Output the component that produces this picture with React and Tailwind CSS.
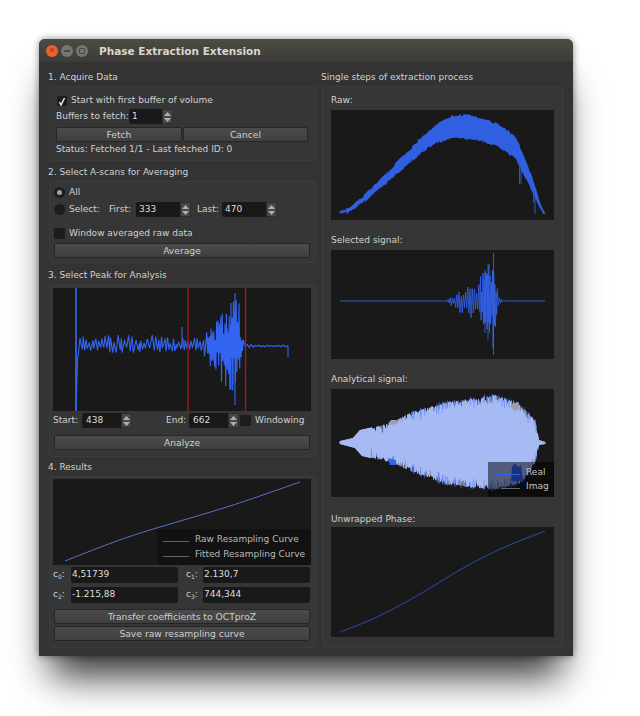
import React from "react";

function rng(seed) {
  let s = seed;
  return () => {
    s = (s * 16807) % 2147483647;
    return (s - 1) / 2147483646;
  };
}
function interp(pts, x) {
  if (x <= pts[0][0]) return pts[0][1];
  for (let i = 1; i < pts.length; i++) {
    if (x <= pts[i][0]) {
      const t = (x - pts[i - 1][0]) / (pts[i][0] - pts[i - 1][0]);
      return pts[i - 1][1] + t * (pts[i][1] - pts[i - 1][1]);
    }
  }
  return pts[pts.length - 1][1];
}
// Catmull-Rom interpolation for smooth envelopes
function curveAt(pts, x) {
  if (x <= pts[0][0]) return pts[0][1];
  for (let i = 0; i < pts.length - 1; i++) {
    if (x <= pts[i + 1][0]) {
      const p0 = pts[Math.max(i - 1, 0)][1];
      const p1 = pts[i][1];
      const p2 = pts[i + 1][1];
      const p3 = pts[Math.min(i + 2, pts.length - 1)][1];
      const t = (x - pts[i][0]) / (pts[i + 1][0] - pts[i][0]);
      return 0.5 * (2 * p1 + (p2 - p0) * t + (2 * p0 - 5 * p1 + 4 * p2 - p3) * t * t + (3 * p1 - p0 - 3 * p2 + p3) * t * t * t);
    }
  }
  return pts[pts.length - 1][1];
}
const line = (pts) => pts.map((p, i) => (i ? "L" : "M") + p[0].toFixed(1) + " " + p[1].toFixed(1)).join("");
function smooth(pts) {
  let d = `M${pts[0][0]} ${pts[0][1]}`;
  for (let i = 0; i < pts.length - 1; i++) {
    const p0 = pts[Math.max(i - 1, 0)];
    const p1 = pts[i];
    const p2 = pts[i + 1];
    const p3 = pts[Math.min(i + 2, pts.length - 1)];
    const c1 = [p1[0] + (p2[0] - p0[0]) / 6, p1[1] + (p2[1] - p0[1]) / 6];
    const c2 = [p2[0] - (p3[0] - p1[0]) / 6, p2[1] - (p3[1] - p1[1]) / 6];
    d += `C${c1[0].toFixed(1)} ${c1[1].toFixed(1)} ${c2[0].toFixed(1)} ${c2[1].toFixed(1)} ${p2[0]} ${p2[1]}`;
  }
  return d;
}

function peakPath() {
  const r = rng(11);
  const upEnv = [[26, 11], [100, 11], [130, 8], [150, 10], [154, 18], [160, 26], [168, 34], [175, 42], [182, 54], [186, 46], [189, 10], [192, 3], [205, 1], [235, 1]];
  const downEnv = [[26, 7], [100, 7], [130, 5], [150, 8], [154, 18], [160, 24], [168, 36], [175, 42], [182, 48], [186, 38], [189, 8], [192, 2], [205, 1], [235, 1]];
  const p = [[23, 123], [24.5, 72], [26, 60], [27, 50]];
  let up = true;
  for (let x = 28; x < 234; ) {
    const a = up ? interp(upEnv, x) : interp(downEnv, x);
    p.push([x, 58 + (up ? -1 : 1) * a * (0.2 + 0.8 * r())]);
    up = !up;
    x += x > 152 && x < 190 ? 0.7 : x > 190 ? 2 : 0.6 + r() * 2;
  }
  p.push([235, 58], [235, 69]);
  return (
    line(p) +
    "M182 5L182 117M129 39L129 60M178 15L178 102M180 30L180 96" +
    "M174 40L174 76M176 40L176 78M178 38L178 80M180 38L180 76M182 40L182 78M184 42L184 76M186 45L186 70"
  );
}

function rawPath() {
  const top = [[9, 101.7], [24, 92.7], [50.7, 68], [80.7, 38], [104, 16.7], [127, 5], [164, 13], [184, 28], [197, 57], [214, 103]];
  const bot = [[9, 104], [27, 95], [67, 63], [100, 36], [127, 28], [157, 33], [184, 48], [201, 80], [214, 105]];
  const r = rng(5);
  let d = "";
  let tn = 0;
  let bn = 0;
  for (let x = 9; x <= 214; x += 0.5) {
    if (r() < 0.3) tn = r() * 2.2;
    if (r() < 0.3) bn = r() * 2.6;
    const t = curveAt(top, x) - tn + 1;
    let b = curveAt(bot, x) + bn - 1;
    if (x > 185 && r() < 0.14) b += r() * 22;
    const X = x.toFixed(1);
    d += `M${X} ${t.toFixed(1)}L${X} ${Math.min(b, 104).toFixed(1)}`;
  }
  return d;
}

function selectedPath() {
  const r = rng(23);
  const env = [[117, 5], [125, 8], [135, 15], [145, 20], [150, 26], [155, 35], [160, 38], [163, 46], [165, 20], [168, 4], [172, 1], [176, 0]];
  const p = [[9, 51], [117, 51]];
  let up = true;
  for (let x = 117; x < 176; ) {
    const a = interp(env, x) * (0.3 + 0.7 * r());
    p.push([x, 51 + (up ? -a : a * 1.1)]);
    up = !up;
    x += x > 148 && x < 166 ? 0.6 : 1.1;
  }
  p.push([176, 51], [214, 51]);
  return line(p) + "M162.5 3L162.5 105M157 14L157 90M154 20L154 83";
}

const analyticTop = [[9, 52], [22, 49], [29, 41], [47, 37], [61, 33], [81, 23], [117, 13], [164, 6], [187, 14], [204, 31], [208, 51], [214, 53]];
const analyticBot = [[9, 55], [24, 59], [31, 67], [61, 74], [84, 84], [117, 96], [164, 101], [191, 94], [204, 74], [208, 56], [214, 55]];
function analyticPaths() {
  const r = rng(37);
  let fill = "";
  let blue = "";
  for (let x = 9; x <= 214; x += 0.5) {
    const t = interp(analyticTop, x);
    const b = interp(analyticBot, x);
    const noisy = x > 40 && x < 207;
    const tj = t + (noisy ? r() * r() * 9 : 0);
    const bj = b - (noisy ? r() * r() * 10 : 0);
    const X = x.toFixed(1);
    fill += `M${X} ${tj.toFixed(1)}L${X} ${bj.toFixed(1)}`;
    if (noisy && x > 70 && r() < 0.16) {
      blue += `M${X} ${(t - r() * 2).toFixed(1)}L${X} ${(t + 4 + r() * 6).toFixed(1)}M${X} ${(b - 4 - r() * 6).toFixed(1)}L${X} ${(b + r() * 2).toFixed(1)}`;
    }
  }
  return { fill, blue };
}
const analytic = analyticPaths();

const phasePts = [[9, 105], [44, 91], [84, 70], [134, 40], [174, 20], [214, 4]];
const curvePts = [[12, 82], [57, 64.5], [97, 51], [177, 27], [247, 3]];

function Plot({ w, h, children, overlay }) {
  return (
    <div className="relative shrink-0 bg-[#191919]" style={{ width: w, height: h }}>
      <svg width={w} height={h} viewBox={`0 0 ${w} ${h}`} className="block" fill="none">
        {children}
      </svg>
      {overlay}
    </div>
  );
}

function Group({ className = "", children }) {
  return <div className={"rounded-[2px] border border-[#3c3c3c] bg-[#363636] " + className}>{children}</div>;
}

function Heading({ children, className = "" }) {
  return <div className={"h-[14px] leading-[16px] text-[#d2d2d2] " + className}>{children}</div>;
}

function Btn({ children, className = "" }) {
  return (
    <div className={"flex h-[15px] items-center justify-center rounded-[2px] border border-[#262626] bg-gradient-to-b from-[#4b4b4b] to-[#3f3f3f] text-[9.2px] text-[#cfcfcf] " + className}>
      {children}
    </div>
  );
}

function Spin({ value, inputClass }) {
  return (
    <div className="flex h-[15px] shrink-0">
      <div className={"flex items-center rounded-l-[2px] bg-[#191919] pl-[3px] text-[#dedede] " + inputClass}>{value}</div>
      <div className="flex w-[11px] flex-col items-center justify-center gap-[2px] rounded-r-[2px] border border-[#2c2c2c] bg-[#484848]">
        <svg width="7" height="4" viewBox="0 0 7 4"><path d="M3.5 0L7 4H0Z" fill="#b0b0b0" /></svg>
        <svg width="7" height="4" viewBox="0 0 7 4"><path d="M0 0H7L3.5 4Z" fill="#b0b0b0" /></svg>
      </div>
    </div>
  );
}

function Check({ checked, className = "" }) {
  return (
    <div className={"flex shrink-0 items-center justify-center rounded-[1px] bg-[#1d1d1d] " + className}>
      {checked && (
        <svg width="8" height="9" viewBox="0 0 8 9" fill="none">
          <path d="M1.5 5L3 8L6.5 1" stroke="#e6e6e6" strokeWidth="1.5" />
        </svg>
      )}
    </div>
  );
}

function Radio({ on }) {
  return (
    <div className="flex h-[11px] w-[11px] shrink-0 items-center justify-center rounded-full bg-[#1d1d1d]">
      {on && <div className="h-[5px] w-[5px] rounded-full bg-[#a0a0a0]" />}
    </div>
  );
}

function Coef({ name, sub, value, labelClass = "w-[18px]" }) {
  return (
    <div className="flex items-center">
      <div className={"text-[#cfcfcf] " + labelClass}>
        {name}
        <sub className="text-[6px]">{sub}</sub>:
      </div>
      <div className="flex h-[16px] w-[107px] items-center rounded-[2px] bg-[#191919] pl-[1px] text-[#dedede]">{value}</div>
    </div>
  );
}

const BLUE = "#3365f2";

export default function App() {
  return (
    <div
      className="h-[716px] w-[640px] overflow-hidden bg-white pl-[39px] pt-[39px] text-[9px]"
      style={{ fontFamily: '"DejaVu Sans", sans-serif' }}
    >
      <div className="flex h-[617px] w-[534px] flex-col rounded-t-[6px] bg-[#333333] shadow-[0_32px_36px_-12px_rgba(0,0,0,0.8),0_0_7px_rgba(0,0,0,0.45)]">
        {/* Title bar */}
        <div className="flex h-[23px] shrink-0 items-center rounded-t-[6px] bg-gradient-to-b from-[#4e4b44] to-[#3c3b37] pl-[7px]">
          <div className="flex h-[12px] w-[12px] items-center justify-center rounded-full bg-[#e9622d] text-[7px] leading-none text-[#7a2a10]">×</div>
          <div className="ml-[3px] h-[12px] w-[12px] rounded-full bg-[#77756f]">
            <div className="mx-[3px] mt-[5px] h-[2px] bg-[#4a4843]" />
          </div>
          <div className="ml-[3px] flex h-[12px] w-[12px] items-center justify-center rounded-full bg-[#77756f]">
            <div className="h-[6px] w-[6px] rounded-[1px] border border-[#4a4843]" />
          </div>
          <div className="ml-[11px] pt-[2px] text-[10.5px] font-bold text-[#d9d6cf]">Phase Extraction Extension</div>
        </div>

        {/* Body */}
        <div className="flex flex-1 pl-[10px] pt-[7px]">
          {/* Left column */}
          <div className="flex w-[267px] flex-col">
            <Heading className="-ml-px">1. Acquire Data</Heading>
            <Group className="mt-[3px] h-[75px] pl-[6px] pr-[7px] pt-[9px]">
              <div className="flex h-[10px] items-center">
                <Check checked className="ml-px h-[10px] w-[10px]" />
                <span className="ml-[4px] text-[#d2d2d2]">Start with first buffer of volume</span>
              </div>
              <div className="mt-[3px] flex items-center">
                <span className="w-[73px] whitespace-nowrap text-[#d2d2d2]">Buffers to fetch:</span>
                <Spin value="1" inputClass="w-[33px]" />
              </div>
              <div className="mt-[3px] flex gap-px">
                <Btn className="w-[126px]">Fetch</Btn>
                <Btn className="w-[125px]">Cancel</Btn>
              </div>
              <div className="mt-[1px] leading-[12px] text-[#d2d2d2]">Status: Fetched 1/1 - Last fetched ID: 0</div>
            </Group>

            <Heading className="-ml-px mt-[3px]">2. Select A-scans for Averaging</Heading>
            <Group className="mt-[3px] h-[82px] pl-[4px] pr-[5px] pt-[5px]">
              <div className="flex h-[11px] items-center">
                <Radio on />
                <span className="ml-[4px] text-[#d2d2d2]">All</span>
              </div>
              <div className="mt-[4px] flex items-center">
                <Radio />
                <span className="ml-[4px] w-[40px] text-[#d2d2d2]">Select:</span>
                <span className="w-[27px] text-[#d2d2d2]">First:</span>
                <Spin value="333" inputClass="w-[44px]" />
                <span className="ml-[6px] w-[25px] text-[#d2d2d2]">Last:</span>
                <Spin value="470" inputClass="w-[44px]" />
              </div>
              <div className="mt-[11px] flex h-[11px] items-center">
                <Check className="h-[11px] w-[11px]" />
                <span className="ml-[4px] text-[#d2d2d2]">Window averaged raw data</span>
              </div>
              <Btn className="mt-[4px] w-[256px]">Average</Btn>
            </Group>

            <Heading className="-ml-px mt-[4px]">3. Select Peak for Analysis</Heading>
            <Group className="mt-[3px] h-[173px] pl-[3px] pt-[3px]">
              <Plot w={258} h={123}>
                <path d="M23 0V123" stroke="#2f59cc" strokeWidth="2" />
                <path d={peakPath()} stroke={BLUE} strokeWidth="1.1" />
                <path d="M135 0V123M192.5 0V123" stroke="#a01a1a" strokeWidth="1.4" />
              </Plot>
              <div className="mt-[2px] flex items-center">
                <span className="w-[29px] text-[#d2d2d2]">Start:</span>
                <Spin value="438" inputClass="w-[39px] pl-[4px]" />
                <span className="ml-[34px] w-[23px] text-[#d2d2d2]">End:</span>
                <Spin value="662" inputClass="w-[39px] pl-[4px]" />
                <Check className="ml-px h-[11px] w-[11px]" />
                <span className="ml-[4px] text-[#d2d2d2]">Windowing</span>
              </div>
              <Btn className="ml-px mt-[7px] w-[256px]">Analyze</Btn>
            </Group>

            <Heading className="-ml-px mt-[2px]">4. Results</Heading>
            <Group className="mt-[3px] h-[172px] pl-[3px] pt-[2px]">
              <Plot
                w={258}
                h={86}
                overlay={
                  <div className="absolute bottom-0 right-0 h-[36px] w-[154px] bg-[#121212] text-[#b9b9b9]">
                    <div className="absolute left-[6px] top-[12px] h-px w-[26px] bg-[#3161ea]" />
                    <div className="absolute left-[6px] top-[27px] h-px w-[26px] bg-[#666666]" />
                    <div className="absolute left-[38px] top-[3px] whitespace-nowrap leading-[14px]">Raw Resampling Curve</div>
                    <div className="absolute left-[38px] top-[18px] whitespace-nowrap leading-[14px]">Fitted Resampling Curve</div>
                  </div>
                }
              >
                <path d={smooth(curvePts)} stroke="#5a6fc8" strokeWidth="1" />
              </Plot>
              <div className="mt-[2px] flex">
                <Coef name="c" sub="0" value="4,51739" />
                <div className="ml-[8px]">
                  <Coef name="c" sub="1" value="2.130,7" labelClass="w-[17px]" />
                </div>
              </div>
              <div className="mt-[4px] flex">
                <Coef name="c" sub="2" value="-1.215,88" />
                <div className="ml-[8px]">
                  <Coef name="c" sub="3" value="744,344" labelClass="w-[17px]" />
                </div>
              </div>
              <Btn className="ml-px mt-[6px] w-[256px]">Transfer coefficients to OCTproZ</Btn>
              <Btn className="ml-px mt-[2px] w-[256px]">Save raw resampling curve</Btn>
            </Group>
          </div>

          {/* Right column */}
          <div className="ml-[6px] flex w-[241px] flex-col">
            <Heading className="-ml-px">Single steps of extraction process</Heading>
            <Group className="mt-[3px] h-[562px] pl-[8px] pt-[5px]">
              <Heading>Raw:</Heading>
              <div className="mt-[4px]">
                <Plot w={223} h={110}>
                  <path d={rawPath()} stroke={BLUE} strokeWidth="0.8" />
                </Plot>
              </div>
              <Heading className="mt-[12px]">Selected signal:</Heading>
              <div className="mt-[4px]">
                <Plot w={223} h={109}>
                  <path d={selectedPath()} stroke={BLUE} strokeWidth="0.8" />
                </Plot>
              </div>
              <Heading className="mt-[12px]">Analytical signal:</Heading>
              <div className="mt-[4px]">
                <Plot
                  w={223}
                  h={108}
                  overlay={
                    <div className="absolute bottom-0 right-0 h-[35px] w-[66px] bg-black/50 text-[#c4c4c4]">
                      <div className="absolute left-[6px] top-[12px] h-px w-[26px] bg-[#3161ea]" />
                      <div className="absolute left-[13px] top-[26px] h-px w-[19px] bg-[#666666]" />
                      <div className="absolute left-[38px] top-[3px] leading-[14px]">Real</div>
                      <div className="absolute left-[38px] top-[17px] leading-[14px]">Imag</div>
                    </div>
                  }
                >
                  <path d={analytic.fill} stroke="#adc0fb" strokeWidth="0.9" />
                  <path d={analytic.blue} stroke="#5c84f2" strokeWidth="0.6" />
                  <path d="M57 69l8 2 0 5-6 0z" fill={BLUE} />
                  <path d="M57 35l3-4 6 0 0 4z" fill="#a0a0a0" />
                  <path d="M181 20l0-5 6-2 2 8z" fill="#a0a0a0" />
                  <path d="M181 78L184 74L187 78L190 76L192 92L180 92Z" fill={BLUE} />
                </Plot>
              </div>
              <Heading className="mt-[14px]">Unwrapped Phase:</Heading>
              <div className="mt-[2px]">
                <Plot w={223} h={110}>
                  <path d={smooth(phasePts)} stroke="#2c4bb0" strokeWidth="1" />
                </Plot>
              </div>
            </Group>
          </div>
        </div>
      </div>
    </div>
  );
}
